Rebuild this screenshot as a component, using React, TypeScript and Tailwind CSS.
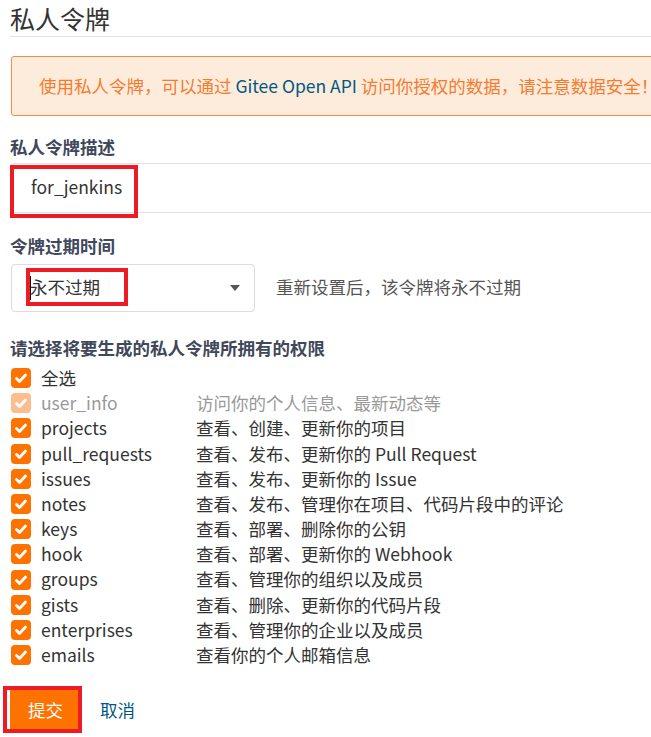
import React from "react";

const rows: { key: string; desc: string; disabled?: boolean }[] = [
  { key: "user_info", desc: "访问你的个人信息、最新动态等", disabled: true },
  { key: "projects", desc: "查看、创建、更新你的项目" },
  { key: "pull_requests", desc: "查看、发布、更新你的 Pull Request" },
  { key: "issues", desc: "查看、发布、更新你的 Issue" },
  { key: "notes", desc: "查看、发布、管理你在项目、代码片段中的评论" },
  { key: "keys", desc: "查看、部署、删除你的公钥" },
  { key: "hook", desc: "查看、部署、更新你的 Webhook" },
  { key: "groups", desc: "查看、管理你的组织以及成员" },
  { key: "gists", desc: "查看、删除、更新你的代码片段" },
  { key: "enterprises", desc: "查看、管理你的企业以及成员" },
  { key: "emails", desc: "查看你的个人邮箱信息" },
];

function Box({ disabled }: { disabled?: boolean }) {
  return (
    <span
      className={
        "flex items-center justify-center w-[20px] h-[20px] rounded-[4px] shrink-0 " +
        (disabled ? "bg-[#febd8f]" : "bg-[#fe7300]")
      }
    >
      <svg viewBox="0 0 20 20" className="w-[20px] h-[20px]">
        <path
          d="M5.5 10.5l3 3 6-6.5"
          stroke="white"
          strokeWidth="2.8"
          fill="none"
          strokeLinecap="round"
          strokeLinejoin="round"
        />
      </svg>
    </span>
  );
}

export default function App() {
  return (
    <div className="relative w-[651px] h-[737px] overflow-hidden bg-white font-['Noto_Sans_CJK_SC',sans-serif] text-[17.5px]">
      <div className="pl-[10px] w-[780px]">
        <div className="text-[25px] leading-[36px] text-[#333] border-b border-[#e3e3e3]">私人令牌</div>

        <div className="mt-[19px] ml-[1px] h-[60px] border border-[#f98b47] bg-[#fdecdc] rounded-[3px] flex items-center pl-[27px] text-[#f47b2f] whitespace-nowrap">
          使用私人令牌，可以通过<span className="text-[#005980]">&nbsp;Gitee Open API&nbsp;</span>访问你授权的数据，请注意数据安全！
        </div>

        <div className="mt-[18px] leading-[25px] font-bold text-[#40485b]">私人令牌描述</div>
        <div className="mt-[3.5px] h-[50px] border border-[#e0e0e0] rounded-[4px] flex items-center pl-[20px] text-[#333]">
          for_jenkins
        </div>

        <div className="mt-[20.5px] leading-[25px] font-bold text-[#40485b]">令牌过期时间</div>
        <div className="mt-[5.5px] flex items-center">
          <div className="ml-[1px] w-[244px] h-[48px] border border-[#dcdcdc] rounded-[4px] flex items-center justify-between pl-[18px] pr-[14px] text-[#333]">
            <span className="flex items-center">
              <span className="w-[1px] h-[24px] bg-black mr-[-1px]" />
              永不过期
            </span>
            <svg viewBox="0 0 10 6" className="w-[10px] h-[6px]">
              <path d="M0 0h10L5 6z" fill="#555" />
            </svg>
          </div>
          <span className="ml-[21px] text-[#555]">重新设置后，该令牌将永不过期</span>
        </div>

        <div className="mt-[23.5px] leading-[25px] font-bold text-[#40485b]">请选择将要生成的私人令牌所拥有的权限</div>
        <div className="mt-[5.5px] flex flex-col">
          <div className="h-[25.2px] flex items-center">
            <span className="ml-[1px]"><Box /></span>
            <span className="ml-[10px] text-[#333]">全选</span>
          </div>
          {rows.map((r) => (
            <div key={r.key} className="h-[25.2px] flex items-center">
              <span className="ml-[1px]"><Box disabled={r.disabled} /></span>
              <span className={"ml-[10px] w-[155px] " + (r.disabled ? "text-[#999]" : "text-[#333]")}>{r.key}</span>
              <span className={r.disabled ? "text-[#999]" : "text-[#333]"}>{r.desc}</span>
            </div>
          ))}
        </div>

        <div className="mt-[19px] flex items-center">
          <div className="w-[71px] h-[46px] bg-[#fe7300] rounded-[3px] text-white flex items-center justify-center">提交</div>
          <span className="ml-[19px] text-[#005980]">取消</span>
        </div>
      </div>

      <div className="absolute left-[10px] top-[165px] w-[128px] h-[53px] border-[4px] border-[#ed1c24]" />
      <div className="absolute left-[26px] top-[268px] w-[102px] h-[38px] border-[4px] border-[#ed1c24]" />
      <div className="absolute left-[3px] top-[686px] w-[79px] h-[47px] border-[4px] border-[#ed1c24]" />
    </div>
  );
}
